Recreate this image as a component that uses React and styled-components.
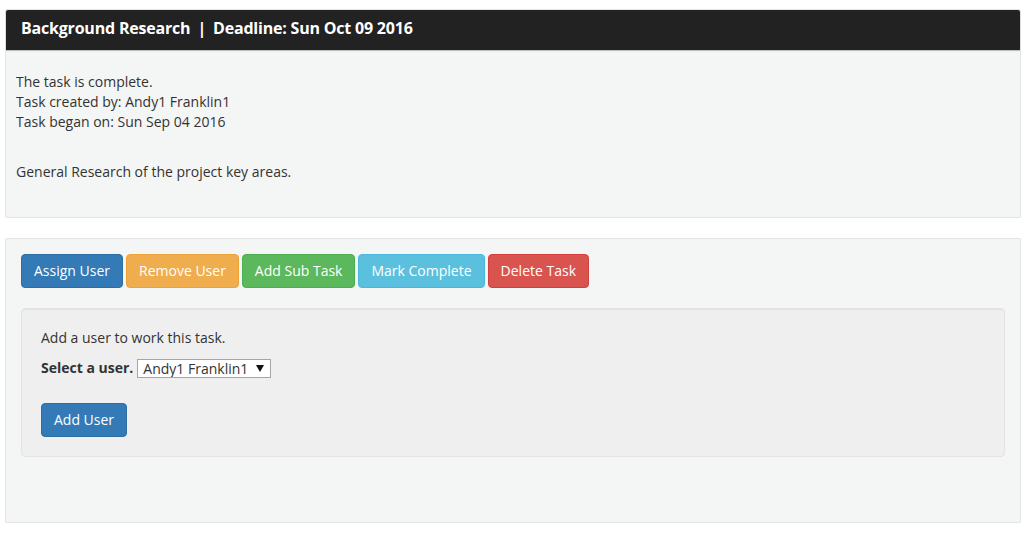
import React from "react";
import styled, { createGlobalStyle } from "styled-components";

const GlobalStyle = createGlobalStyle`
  body {
    margin: 0;
    background: #fff;
    font-family: "Open Sans", "Liberation Sans", sans-serif;
    font-size: 14px;
    line-height: 20px;
    color: #333;
  }
`;

const Page = styled.div`
  padding: 9px 7px 10px 5px;
  display: flex;
  flex-direction: column;
  gap: 20px;
`;

const Panel = styled.div`
  background: #f4f6f5;
  border: 1px solid #e3e5e4;
  border-radius: 2px;
`;

const PanelHeading = styled.div`
  background: #222;
  color: #fff;
  font-weight: 700;
  font-size: 16px;
  line-height: 20px;
  letter-spacing: -0.2px;
  padding: 8px 15px 12px;
  border-radius: 2px 2px 0 0;
  box-shadow: 0 1px 1px rgba(0, 0, 0, 0.25);
`;

const Sep = styled.span`
  padding: 0 7px;
`;

const PanelBody = styled.div`
  padding: ${(p) => p.$pad || "15px"};
`;

const Line = styled.div`
  line-height: 20px;
`;

const Description = styled.p`
  margin: 30px 0 0;
`;

const Toolbar = styled.div`
  display: flex;
  gap: 3px;
`;

const colors = {
  primary: ["#337ab7", "#2e6da4"],
  warning: ["#f0ad4e", "#eea236"],
  success: ["#5cb85c", "#4cae4c"],
  info: ["#5bc0de", "#46b8da"],
  danger: ["#d9534f", "#d43f3a"],
};

const Button = styled.button`
  font-family: inherit;
  font-size: 14px;
  line-height: 20px;
  padding: 6px 12px;
  color: #fff;
  background: ${(p) => colors[p.$kind][0]};
  border: 1px solid ${(p) => colors[p.$kind][1]};
  border-radius: 4px;
  cursor: pointer;
`;

const Well = styled.div`
  margin-top: 20px;
  background: #efefef;
  border: 1px solid #e3e3e3;
  border-radius: 4px;
  padding: 19px;
  box-shadow: inset 0 1px 1px rgba(0, 0, 0, 0.05);
`;

const FormRow = styled.div`
  margin-top: 10px;
  display: flex;
  align-items: center;
  gap: 4px;
`;

const Label = styled.label`
  font-weight: 700;
`;

const arrow =
  "data:image/svg+xml;utf8,<svg xmlns='http://www.w3.org/2000/svg' width='8' height='7'><path d='M0 0h8L4 7z' fill='%23111'/></svg>";

const Select = styled.select`
  appearance: none;
  -webkit-appearance: none;
  font-family: inherit;
  font-size: 14px;
  line-height: 17px;
  height: 19px;
  width: 134px;
  padding: 0 18px 0 5px;
  border: 1px solid #a6a6a6;
  border-radius: 0;
  background: #fff url("${arrow}") no-repeat right 6px center;
  color: #333;
`;

const Actions = styled.div`
  margin-top: 25px;
`;

export default function App() {
  return (
    <>
      <GlobalStyle />
      <Page>
        <Panel>
          <PanelHeading>
            Background Research<Sep>|</Sep>Deadline: Sun Oct 09 2016
          </PanelHeading>
          <PanelBody $pad="22px 10px 35px">
            <Line>The task is complete.</Line>
            <Line>Task created by: Andy1 Franklin1</Line>
            <Line>Task began on: Sun Sep 04 2016</Line>
            <Description>General Research of the project key areas.</Description>
          </PanelBody>
        </Panel>
        <Panel>
          <PanelBody $pad="15px 15px 65px">
            <Toolbar>
              <Button $kind="primary">Assign User</Button>
              <Button $kind="warning">Remove User</Button>
              <Button $kind="success">Add Sub Task</Button>
              <Button $kind="info">Mark Complete</Button>
              <Button $kind="danger">Delete Task</Button>
            </Toolbar>
            <Well>
              <div>Add a user to work this task.</div>
              <FormRow>
                <Label>Select a user.</Label>
                <Select defaultValue="andy">
                  <option value="andy">Andy1 Franklin1</option>
                </Select>
              </FormRow>
              <Actions>
                <Button $kind="primary">Add User</Button>
              </Actions>
            </Well>
          </PanelBody>
        </Panel>
      </Page>
    </>
  );
}
